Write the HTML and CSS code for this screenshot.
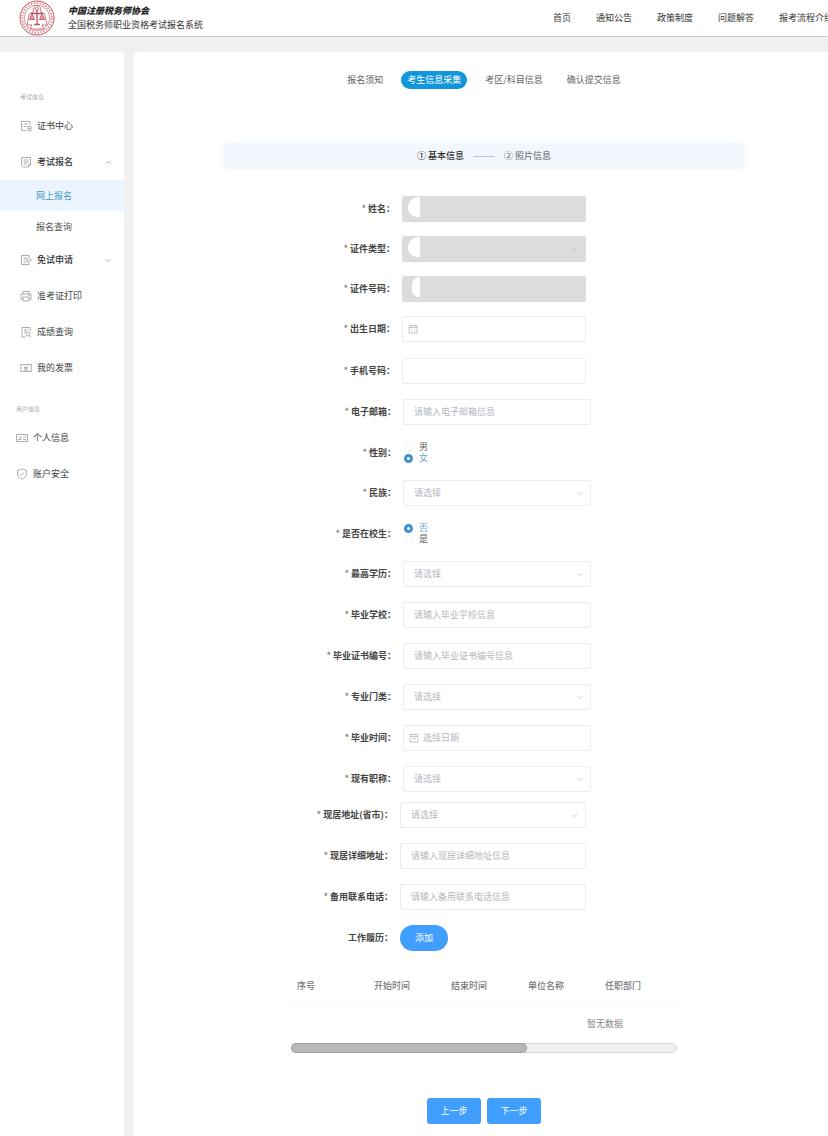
FILE: index.html
```html
<!DOCTYPE html>
<html lang="zh-CN">
<head>
    <meta charset="UTF-8">
    <meta name="viewport" content="width=device-width, initial-scale=1.0">
    <title>全国税务师职业资格考试报名系统</title>
    <link rel="stylesheet" href="styles.css">
</head>
<body>
    <header class="header">
        <div class="brand">
            <svg class="logo" viewBox="0 0 36 36" fill="none" stroke="#c4525a">
                <circle cx="18" cy="18" r="17" stroke-width="1"/>
                <circle cx="18" cy="18" r="14.8" stroke-width="2" stroke-dasharray="1.6 1.4" opacity=".6"/>
                <circle cx="18" cy="18" r="12.800" stroke-width=".6"/>
                <path d="M14.500 12c-1-4 1-6.500 3.500-6.500s4.500 2.500 3.500 6.500l4 2 2.500 11h-5l2 4h-14l2-4H8l2.500-11z" stroke-width=".8"/>
                <path d="M18 10v14M12 13.500h12M15 24.500h6" stroke-width="1.300"/>
                <path d="M13 14l-2.500 5.500h5zM23 14l-2.500 5.500h5z" fill="#c4525a" fill-opacity=".5" stroke-width=".9"/>
                <circle cx="18" cy="9" r="1.500" stroke-width=".8"/>
            </svg>
            <div class="brand-text">
                <div class="brand-name">中国注册税务师协会</div>
                <div class="brand-system">全国税务师职业资格考试报名系统</div>
            </div>
        </div>
        <nav class="top-nav">
            <a href="#">首页</a>
            <a href="#">通知公告</a>
            <a href="#">政策制度</a>
            <a href="#">问题解答</a>
            <a href="#">报考流程介绍</a>
        </nav>
    </header>

    <div class="layout">
        <aside class="sidebar">
            <div class="menu-title">考试信息</div>
            <nav class="menu">
                <a class="menu-item" href="#">
                    <svg class="icon" viewBox="0 0 12 12"><path d="M10 5V1.500H1.500v9H6M3.500 4h4.500M3.500 6.500h3M8 6.500h3v4.500H8zM8 8.500h3"/></svg>
                    证书中心
                </a>
                <a class="menu-item open" href="#">
                    <svg class="icon" viewBox="0 0 12 12"><path d="M1.500 1.500h9V9l-2 2h-5.500l-1.500-1.500zM3.500 4h5M3.500 6h5M3.500 8h3M10.500 8.500h-2v2"/></svg>
                    考试报名
                    <svg class="arrow" viewBox="0 0 8 8"><path d="M1 5.500l3-3 3 3"/></svg>
                </a>
                <a class="submenu-item active" href="#">网上报名</a>
                <a class="submenu-item" href="#">报名查询</a>
                <a class="menu-item open" href="#">
                    <svg class="icon" viewBox="0 0 12 12"><path d="M9 4V1.500H1.500v9H9V9M3.500 4h3.500M3.500 6h3M3.500 8.500h2M7 8l.5-2 2-1.500L11.500 6 9 8z"/></svg>
                    免试申请
                    <svg class="arrow" viewBox="0 0 8 8"><path d="M1 2.500l3 3 3-3"/></svg>
                </a>
                <a class="menu-item" href="#">
                    <svg class="icon" viewBox="0 0 12 12"><path d="M3 4V1.500h6V4M3 9H1V4h10v5H9M3 7h6v4H3zM8 5.500h1.500"/></svg>
                    准考证打印
                </a>
                <a class="menu-item" href="#">
                    <svg class="icon" viewBox="0 0 12 12"><path d="M10 5V1.500H2v9.500h3.500M4 4h4M4 6h2M9.500 9.500L11 11"/><circle cx="8" cy="8" r="2"/></svg>
                    成绩查询
                </a>
                <a class="menu-item" href="#">
                    <svg class="icon" viewBox="0 0 12 12"><path d="M.5 2.500h11v2L10.500 6l1 1.500v2H.5v-2L1.500 6l-1-1.500zM4 4.500l2 1.500 2-1.500M6 6v2M4 8h4M4 6h4"/></svg>
                    我的发票
                </a>
            </nav>
            <div class="menu-title user">用户信息</div>
            <nav class="menu user">
                <a class="menu-item" href="#">
                    <svg class="icon" viewBox="0 0 12 12"><path d="M.5 2.500h11v7H.5zM2 7.500h3V5H2.500M7 5h3M7 7.500h3"/></svg>
                    个人信息
                </a>
                <a class="menu-item" href="#">
                    <svg class="icon" viewBox="0 0 12 12"><path d="M6 1l4.500 1.500V6c0 2.500-2 4-4.500 5.200C3.500 10 1.500 8.500 1.500 6V2.500zM4 5.800l1.500 1.500L8.200 4.700"/></svg>
                    账户安全
                </a>
            </nav>
        </aside>

        <main class="main">
            <nav class="tabs">
                <a href="#">报名须知</a>
                <a class="active" href="#">考生信息采集</a>
                <a href="#">考区/科目信息</a>
                <a href="#">确认提交信息</a>
            </nav>

            <div class="steps">
                <span class="step current">① 基本信息</span>
                <span class="step-line"></span>
                <span class="step">② 照片信息</span>
            </div>

            <form class="form">
                <div class="group identity">
                    <div class="row">
                        <label class="required" for="xingming">姓名：</label>
                        <div class="control masked"><input type="text" id="xingming" disabled></div>
                    </div>
                    <div class="row">
                        <label class="required" for="zhengjian">证件类型：</label>
                        <div class="control select masked">
                            <select id="zhengjian" disabled><option></option></select>
                            <svg class="arrow" viewBox="0 0 8 8"><path d="M1 2.500l3 3 3-3"/></svg>
                        </div>
                    </div>
                    <div class="row">
                        <label class="required" for="haoma">证件号码：</label>
                        <div class="control masked narrow"><input type="text" id="haoma" disabled></div>
                    </div>
                    <div class="row">
                        <label class="required" for="birthday">出生日期：</label>
                        <div class="control date">
                            <svg class="calendar" viewBox="0 0 10 10"><path d="M1 1.500h8v7.500H1zM1 3.500h8M3 .5v2M7 .5v2M3 5.500h1M6 5.500h1M3 7.500h1M6 7.500h1"/></svg>
                            <input type="text" id="birthday">
                        </div>
                    </div>
                    <div class="row phone">
                        <label class="required" for="phone">手机号码：</label>
                        <div class="control"><input type="text" id="phone"></div>
                    </div>
                </div>

                <div class="group education">
                    <div class="row">
                        <label class="required" for="email">电子邮箱：</label>
                        <div class="control"><input type="text" id="email" placeholder="请输入电子邮箱信息"></div>
                    </div>
                    <div class="row radio-row" role="radiogroup" aria-labelledby="gender">
                        <span class="label required" id="gender">性别：</span>
                        <div class="radios">
                            <label><input type="radio" name="gender">男</label>
                            <label><input type="radio" name="gender" checked>女</label>
                        </div>
                    </div>
                    <div class="row">
                        <label class="required" for="minzu">民族：</label>
                        <div class="control select">
                            <select id="minzu"><option>请选择</option></select>
                            <svg class="arrow" viewBox="0 0 8 8"><path d="M1 2.500l3 3 3-3"/></svg>
                        </div>
                    </div>
                    <div class="row radio-row" role="radiogroup" aria-labelledby="student">
                        <span class="label required" id="student">是否在校生：</span>
                        <div class="radios">
                            <label><input type="radio" name="student" checked>否</label>
                            <label><input type="radio" name="student">是</label>
                        </div>
                    </div>
                    <div class="row">
                        <label class="required" for="xueli">最高学历：</label>
                        <div class="control select">
                            <select id="xueli"><option>请选择</option></select>
                            <svg class="arrow" viewBox="0 0 8 8"><path d="M1 2.500l3 3 3-3"/></svg>
                        </div>
                    </div>
                    <div class="row">
                        <label class="required" for="school">毕业学校：</label>
                        <div class="control"><input type="text" id="school" placeholder="请输入毕业学校信息"></div>
                    </div>
                    <div class="row">
                        <label class="required" for="certificate">毕业证书编号：</label>
                        <div class="control"><input type="text" id="certificate" placeholder="请输入毕业证书编号信息"></div>
                    </div>
                    <div class="row">
                        <label class="required" for="major">专业门类：</label>
                        <div class="control select">
                            <select id="major"><option>请选择</option></select>
                            <svg class="arrow" viewBox="0 0 8 8"><path d="M1 2.500l3 3 3-3"/></svg>
                        </div>
                    </div>
                    <div class="row">
                        <label class="required" for="graduation">毕业时间：</label>
                        <div class="control date">
                            <svg class="calendar" viewBox="0 0 10 10"><path d="M1 1.500h8v7.500H1zM1 3.500h8M3 .5v2M7 .5v2M3 5.500h4"/></svg>
                            <input type="text" id="graduation" placeholder="选择日期">
                        </div>
                    </div>
                    <div class="row">
                        <label class="required" for="zhicheng">现有职称：</label>
                        <div class="control select">
                            <select id="zhicheng"><option>请选择</option></select>
                            <svg class="arrow" viewBox="0 0 8 8"><path d="M1 2.500l3 3 3-3"/></svg>
                        </div>
                    </div>
                </div>

                <div class="group contact">
                    <div class="row">
                        <label class="required" for="city">现居地址(省市)：</label>
                        <div class="control select">
                            <select id="city"><option>请选择</option></select>
                            <svg class="arrow" viewBox="0 0 8 8"><path d="M1 2.500l3 3 3-3"/></svg>
                        </div>
                    </div>
                    <div class="row">
                        <label class="required" for="address">现居详细地址：</label>
                        <div class="control"><input type="text" id="address" placeholder="请输入现居详细地址信息"></div>
                    </div>
                    <div class="row">
                        <label class="required" for="backup">备用联系电话：</label>
                        <div class="control"><input type="text" id="backup" placeholder="请输入备用联系电话信息"></div>
                    </div>
                    <div class="row">
                        <span class="label">工作履历：</span>
                        <button type="button" class="btn btn-add">添加</button>
                    </div>
                </div>

                <div class="table-wrap">
                    <table class="history">
                        <thead>
                            <tr>
                                <th>序号</th>
                                <th>开始时间</th>
                                <th>结束时间</th>
                                <th>单位名称</th>
                                <th>任职部门</th>
                                <th class="rest"></th>
                            </tr>
                        </thead>
                        <tbody>
                            <tr><td colspan="6">暂无数据</td></tr>
                        </tbody>
                    </table>
                </div>
                <div class="scrollbar"><div class="scrollbar-thumb"></div></div>

                <div class="actions">
                    <button type="button" class="btn">上一步</button>
                    <button type="button" class="btn">下一步</button>
                </div>
            </form>
        </main>
    </div>
</body>
</html>
```
FILE: styles.css
```css
* {
    box-sizing: border-box;
}

body {
    margin: 0;
    min-height: 100vh;
    display: flex;
    flex-direction: column;
    background-color: #f0f0f0;
    color: #606266;
    font-family: "Noto Sans CJK SC", sans-serif;
    font-size: 9px;
    line-height: 12px;
}

a {
    color: inherit;
    text-decoration: none;
}

svg {
    flex: none;
}

input, select, button {
    font-family: inherit;
    font-size: 9px;
}

/* header */
.header {
    display: flex;
    align-items: center;
    height: 37px;
    padding-left: 19px;
    overflow: hidden;
    background-color: #fff;
    border-bottom: 1px solid #c8c8c8;
}

.brand {
    display: flex;
    align-items: center;
    gap: 13px;
    flex: none;
}

.logo {
    width: 36px;
    height: 36px;
}

.brand-name {
    color: #222;
    font-weight: 900;
    font-style: italic;
    line-height: 14px;
}

.brand-system {
    color: #333;
    line-height: 14px;
}

.top-nav {
    display: flex;
    flex: none;
    gap: 25px;
    margin-left: auto;
    margin-right: -5px;
    color: #333;
    white-space: nowrap;
}

/* layout */
.layout {
    display: flex;
    flex: 1;
    gap: 9px;
    margin-top: 15px;
}

.sidebar {
    flex: none;
    width: 124px;
    padding-top: 34px;
    background-color: #fff;
}

.menu-title {
    height: 22px;
    padding-left: 20px;
    color: #aaa;
    font-size: 6px;
    line-height: 22px;
}

.menu-title.user {
    margin-top: 12px;
    padding-left: 16px;
}

.menu-item {
    display: flex;
    align-items: center;
    gap: 5px;
    height: 36px;
    padding: 0 12px 0 20px;
    color: #444;
}

.menu-item.open {
    color: #333;
    font-weight: 500;
}

.menu.user .menu-item {
    padding-left: 16px;
}

.submenu-item {
    display: block;
    padding-left: 36px;
    color: #555;
    line-height: 31px;
}

.submenu-item.active {
    background-color: #ecf4ff;
    color: #4a9ac0;
}

.icon, .arrow, .calendar {
    fill: none;
    stroke: #999;
    stroke-width: 0.8;
}

.icon {
    width: 12px;
    height: 12px;
}

.arrow {
    width: 7px;
    height: 7px;
    margin-left: auto;
}

.main {
    flex: 1;
    padding: 19px 0 13px 7px;
    background-color: #fff;
    border-top-left-radius: 6px;
}

.tabs {
    display: flex;
    justify-content: center;
    gap: 12px;
    line-height: 18px;
}

.tabs a {
    padding: 0 6px;
    border-radius: 9px;
}

.tabs .active {
    background-color: #1296db;
    color: #fff;
}

.steps {
    display: flex;
    align-items: center;
    justify-content: center;
    gap: 10px;
    max-width: 520px;
    height: 26px;
    margin: 54px auto 27px;
    border-radius: 4px;
    background-color: #f2f7fd;
    box-shadow: 0 0 5px 1px #f2f7fd;
}

.step.current {
    color: #303133;
    font-weight: 500;
}

.step-line {
    width: 20px;
    height: 1px;
    background-color: #c0c4cc;
}

/* form */
.form {
    max-width: 386px;
    margin: 0 auto;
}

.group {
    display: flex;
    flex-direction: column;
    gap: 15px;
    margin-bottom: 15px;
}

.row {
    display: flex;
    align-items: center;
    height: 26px;
}

.row > label, .label {
    flex: none;
    width: 112px;
    padding-right: 7px;
    color: #444;
    font-weight: 700;
    text-align: right;
}

.required::before {
    content: "* ";
    color: #888;
}

.control {
    display: flex;
    align-items: center;
    width: 188px;
    height: 26px;
    border: 1px solid #ebedf0;
    border-radius: 2px;
    background-color: #fff;
}

.control input, .control select {
    flex: 1;
    min-width: 0;
    height: 24px;
    padding: 0 10px 2px;
    border: none;
    outline: none;
    background: transparent;
    color: #b4b7bd;
    appearance: none;
}

.control input::placeholder {
    color: #b4b7bd;
}

.control .arrow {
    margin-right: 7px;
    stroke: #b4b7bd;
}

.control.date {
    padding-left: 5px;
}

.date input {
    padding: 0 4px 2px;
}

.calendar {
    width: 10px;
    height: 10px;
    stroke: #b4b7bd;
}

.identity {
    gap: 14px;
}

.identity .phone {
    margin-top: 2px;
}

.identity .row > label {
    width: 111px;
}

.identity .control {
    width: 184px;
}

/* wiped-out personal data at the start of the field */
.identity .masked {
    border-color: #dcdcdc;
    background-color: #dcdcdc;
}

.masked::before {
    content: "";
    flex: none;
    align-self: flex-start;
    width: 12px;
    height: 20px;
    margin-left: 5px;
    border-radius: 12px 0 0 10px;
    background-color: #fff;
}

.masked.narrow::before {
    width: 8px;
    margin-left: 9px;
}

.radio-row {
    height: 25px;
}

.radios {
    display: flex;
    flex-direction: column;
}

.radios label {
    display: flex;
    align-items: center;
    gap: 6px;
    height: 11px;
    padding-left: 1px;
}

.radios input {
    width: 9px;
    height: 9px;
    margin: 0;
    border: 1px solid #f0f1f4;
    border-radius: 50%;
    background-color: #fff;
    appearance: none;
}

.radios input:checked {
    border: 3px solid #3d8fcf;
}

.radios label:has(input:checked) {
    color: #6aa9cf;
}

.education {
    margin-bottom: 10px;
}

.contact .row > label, .contact .label {
    width: 109px;
}

.contact .control {
    width: 186px;
}

.btn {
    width: 54px;
    height: 26px;
    padding: 0 0 2px;
    border: none;
    border-radius: 3px;
    background-color: #409eff;
    color: #fff;
    cursor: pointer;
}

.btn-add {
    width: 48px;
    border-radius: 13px;
}

.table-wrap {
    margin-top: 16px;
    overflow: hidden;
}

.history {
    width: 628px;
    border-collapse: collapse;
    table-layout: fixed;
}

.history th {
    width: 77px;
    height: 38px;
    padding: 0 6px;
    border-bottom: 1px solid #f7f8f9;
    color: #777;
    font-weight: 500;
    text-align: left;
}

.history .rest {
    width: 243px;
}

.history td {
    height: 38px;
    padding: 0;
    color: #888;
    text-align: center;
}

.scrollbar {
    height: 10px;
    border: 1px solid #d4d4d4;
    border-radius: 5px;
    background-color: #f0f0f0;
}

.scrollbar-thumb {
    width: 61%;
    height: 8px;
    border-radius: 4px;
    background-color: #b8b8b8;
    box-shadow: 0 0 0 1px #a0a0a0;
}

.actions {
    display: flex;
    justify-content: center;
    gap: 6px;
    margin-top: 45px;
}
```
